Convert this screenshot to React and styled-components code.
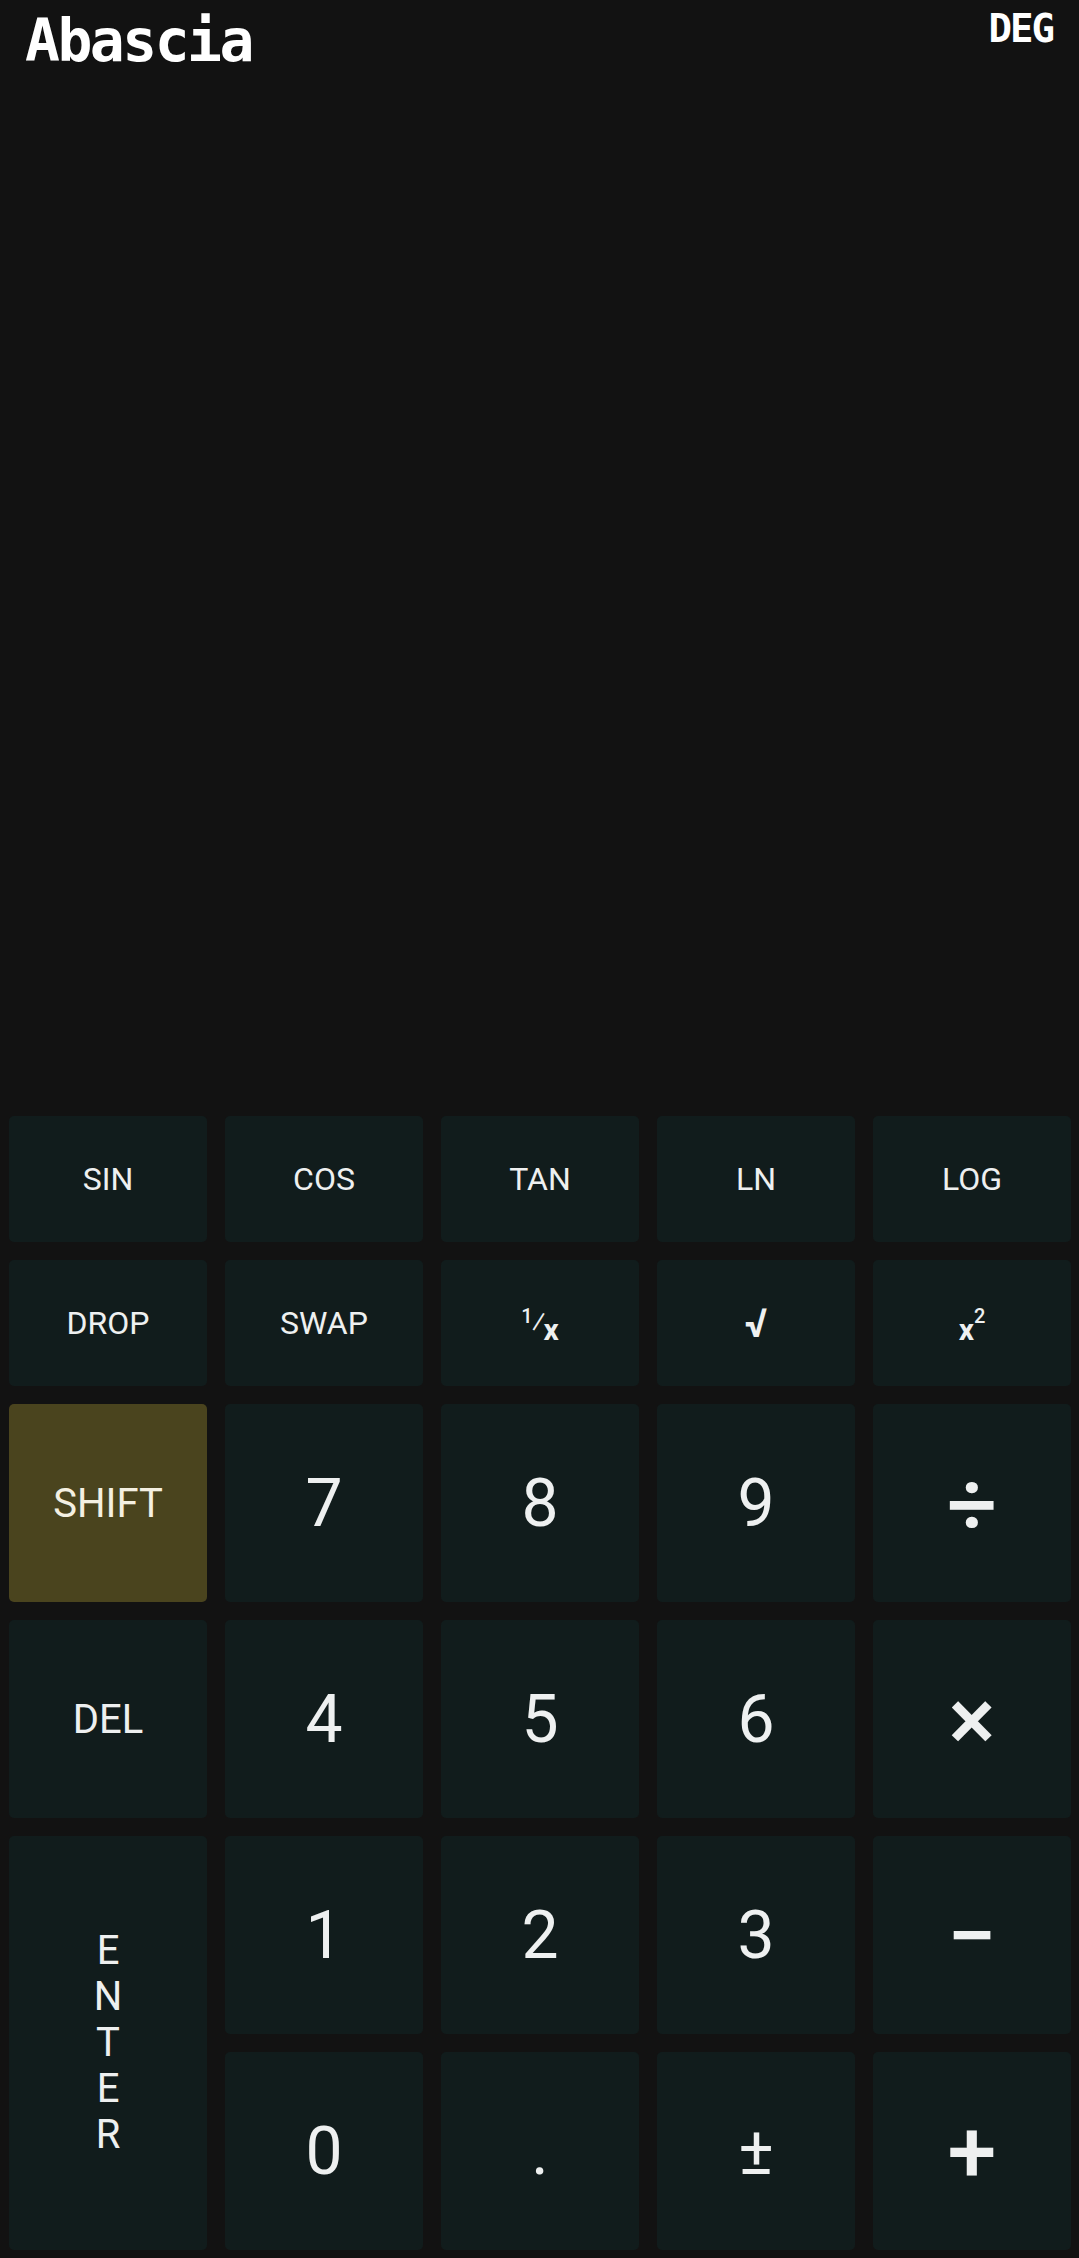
import React from "react";
import styled, { createGlobalStyle, css } from "styled-components";

const GlobalStyle = createGlobalStyle`
  html, body {
    margin: 0;
    padding: 0;
    background: #121212;
  }
  * {
    box-sizing: border-box;
  }
`;

const rows = [
  [
    { label: "SIN", kind: "fn" },
    { label: "COS", kind: "fn" },
    { label: "TAN", kind: "fn" },
    { label: "LN", kind: "fn" },
    { label: "LOG", kind: "fn" }
  ],
  [
    { label: "DROP", kind: "fn" },
    { label: "SWAP", kind: "fn" },
    { label: "inv", kind: "fn" },
    { label: "√", kind: "root" },
    { label: "sq", kind: "fn" }
  ],
  [
    { label: "SHIFT", kind: "cmd", accent: true },
    { label: "7", kind: "num" },
    { label: "8", kind: "num" },
    { label: "9", kind: "num" },
    { label: "÷", kind: "op" }
  ],
  [
    { label: "DEL", kind: "cmd" },
    { label: "4", kind: "num" },
    { label: "5", kind: "num" },
    { label: "6", kind: "num" },
    { label: "×", kind: "op" }
  ],
  [
    { label: "ENTER", kind: "enter" },
    { label: "1", kind: "num" },
    { label: "2", kind: "num" },
    { label: "3", kind: "num" },
    { label: "−", kind: "op" }
  ],
  [
    { label: "0", kind: "num" },
    { label: ".", kind: "num" },
    { label: "±", kind: "num" },
    { label: "+", kind: "op" }
  ]
];

const renderLabel = (key) => {
  if (key.label === "inv") {
    return (
      <Fraction>
        <Small $up>1</Small>
        <Slash>⁄</Slash>
        <Var>x</Var>
      </Fraction>
    );
  }
  if (key.label === "sq") {
    return (
      <Fraction>
        <Var>x</Var>
        <Small $up>2</Small>
      </Fraction>
    );
  }
  if (key.kind === "enter") {
    return (
      <Stack>
        {key.label.split("").map((ch, i) => (
          <span key={i}>{ch}</span>
        ))}
      </Stack>
    );
  }
  return key.label;
};

const App = () => {
  return (
    <Page>
      <GlobalStyle />
      <Header>
        <Title>Abascia</Title>
        <Mode>DEG</Mode>
      </Header>
      <Display />
      <Keypad>
        {rows.flat().map((key, i) => (
          <Key
            key={i}
            $kind={key.kind}
            $accent={key.accent}
            $tall={key.kind === "enter"}
          >
            {renderLabel(key)}
          </Key>
        ))}
      </Keypad>
    </Page>
  );
};

export default App;

const Page = styled.div`
  height: 100vh;
  display: flex;
  flex-direction: column;
  background: #121212;
  overflow: hidden;
`;

const Header = styled.div`
  display: flex;
  justify-content: space-between;
  align-items: flex-start;
  padding: 0 26px 0 25px;
  color: #ffffff;
  font-family: "DejaVu Sans Mono", monospace;
  font-weight: 700;
`;

const Title = styled.div`
  font-size: 58px;
  line-height: 1;
  letter-spacing: -2.5px;
  margin-top: 12px;
`;

const Mode = styled.div`
  font-size: 39px;
  line-height: 1;
  letter-spacing: -2px;
  margin-top: 9px;
`;

const Display = styled.div`
  flex: 1;
`;

const Keypad = styled.div`
  display: grid;
  grid-template-columns: repeat(5, 1fr);
  grid-template-rows: 126px 126px repeat(4, 198px);
  gap: 18px;
  padding: 0 8px 8px 9px;
`;

const sizes = {
  fn: css`
    font-size: 32px;
  `,
  root: css`
    font-size: 40px;
    font-weight: 700;
  `,
  cmd: css`
    font-size: 40px;
  `,
  enter: css`
    font-size: 40px;
  `,
  num: css`
    font-size: 66px;
  `,
  op: css`
    font-size: 88px;
    font-weight: 500;
  `
};

const Key = styled.button`
  display: flex;
  align-items: center;
  justify-content: center;
  border: none;
  border-radius: 5px;
  padding: 0;
  margin: 0;
  font-family: Roboto, "Noto Sans", sans-serif;
  font-weight: 400;
  color: ${(p) => (p.$accent ? "#f4f0e2" : "#eef0f0")};
  background: ${(p) => (p.$accent ? "#4a441e" : "#111c1c")};
  grid-row: ${(p) => (p.$tall ? "span 2" : "auto")};
  ${(p) => sizes[p.$kind]}
`;

const Stack = styled.span`
  display: flex;
  flex-direction: column;
  align-items: center;
  line-height: 46px;
`;

const Fraction = styled.span`
  display: inline-flex;
  align-items: flex-start;
  line-height: 1;
  margin-top: 14px;
`;

const Small = styled.span`
  font-size: 20px;
  font-weight: 500;
  margin-top: ${(p) => (p.$up ? "-9px" : "0")};
`;

const Slash = styled.span`
  font-size: 30px;
  margin: -8px -2px 0 -1px;
`;

const Var = styled.span`
  font-size: 30px;
  font-weight: 700;
  margin-top: 0;
`;
